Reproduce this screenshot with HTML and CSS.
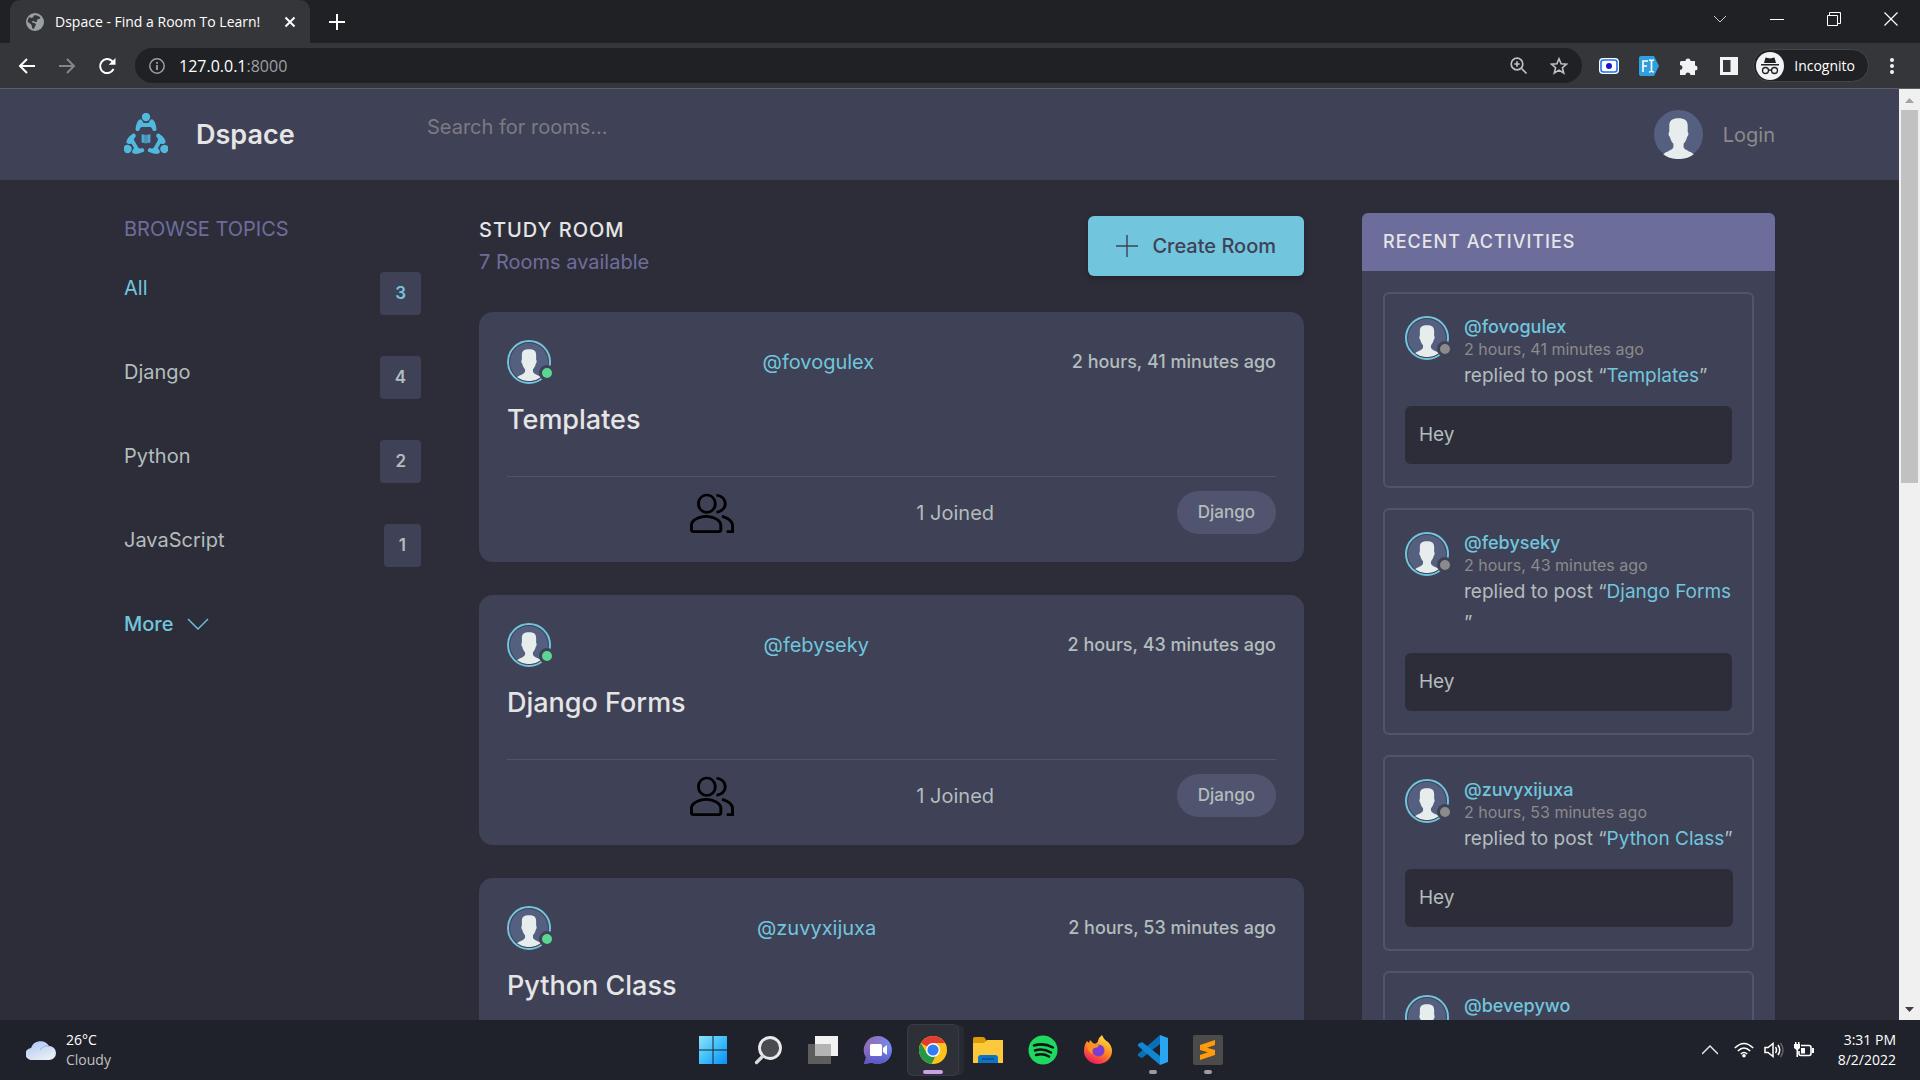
FILE: index.html
```html
<!DOCTYPE html>
<html lang="en">
<head>
<meta charset="utf-8">
<title>Dspace - Find a Room To Learn!</title>
<link rel="stylesheet" href="styles.css">
</head>
<body>
<svg class="sprite" aria-hidden="true">
  <symbol id="avatar" viewBox="0 0 48 48">
    <circle cx="24" cy="24" r="24" fill="#556080"/>
    <path fill="#e7eced" d="M24 8c6 0 9 2 9 7v6c1 1 1 4-.6 5.400-.6 3-2 5-3.400 6.600v3c0 2 3 3.500 6 4.800 2 .8 3 1.500 4 2.600A24 24 0 0 1 24 48a24 24 0 0 1-15-4.600c1-1.100 2-1.800 4-2.600 3-1.300 6-2.800 6-4.800v-3c-1.400-1.600-2.800-3.600-3.400-6.600C14 25 14 22 15 21v-6c0-5 3-7 9-7z"/>
  </symbol>
  <symbol id="users" viewBox="0 0 30 30" preserveAspectRatio="none">
    <path d="M30 30h-5v-2h3v-4c0-2-3-4.500-6.500-5.600l.6-1.900C26.500 17.800 30 20.800 30 24zM20 30H2c-1 0-2-1-2-2v-4c0-4.200 5.700-7.500 11-7.500S22 19.800 22 24v4c0 1-1 2-2 2zM11 18.500c-4.800 0-9 2.900-9 5.500v4h18v-4c0-2.600-4.200-5.500-9-5.500zM18 15.300v-2c3-.4 5-2.400 5-5.300s-2-5-5-5.300V.7c4 .2 7 3.300 7 7.300s-3 7.100-7 7.300zM11.500 15.500c-3.700 0-6.700-3.300-6.700-7.500S7.800.5 11.500.5s6.700 3.300 6.700 7.500-3 7.500-6.700 7.500zm0-13c-2.700 0-4.700 2.400-4.700 5.500s2 5.500 4.700 5.500 4.700-2.400 4.700-5.500-2-5.500-4.700-5.500z"/>
  </symbol>
  <symbol id="member" viewBox="0 0 44 44">
    <circle cx="22" cy="4" r="4.200"/>
    <path d="M15.500 6.500Q17 5.500 18.500 8l1 2h5l1-2Q27 5.500 28.500 6.500 32 9 32.500 16.500 32 18.500 30 18q-1.500 0-2-2.500-.5-1.500-2-1.500h-8q-1.500 0-2 1.500-.5 2.500-2 2.500-2 .5-2.500-1.500Q12 9 15.500 6.500z"/>
  </symbol>
</svg>

<header class="browser">
  <div class="tabs">
    <div class="tab">
      <svg class="tab-icon" viewBox="0 0 18 18"><circle cx="9" cy="9" r="9" fill="#9aa0a6"/><path fill="#35363a" d="M8 2.500c2-.8 5 .3 6.500 2.500-1 1.400-2 .6-3 1.500-1 .8 0 2-1 2.500C9 9.500 8.500 8 7 8c-1.500 0-1 1.500 0 1.800 1.200.4 3 .2 2.800 2C9.600 13.500 8 14 8 16c-1-.2-1.500-.5-2-1 0-2-.4-3.500-2-4.500-1-.7-2-1-2.400-2C1.700 6 3 4.500 4 4c.5 1.500 2 .8 3 .2.700-.4.300-1.200 1-1.700z"/></svg>
      <span class="tab-title">Dspace - Find a Room To Learn!</span>
      <button class="plain" aria-label="Close tab"><svg width="12" height="12" viewBox="0 0 12 12"><path d="M1.500 1.500l9 9m0-9l-9 9" stroke="#fff" stroke-width="2"/></svg></button>
    </div>
    <button class="plain new-tab" aria-label="New tab"><svg width="16" height="16" viewBox="0 0 16 16"><path d="M8 0v16M0 8h16" stroke="#fff" stroke-width="2"/></svg></button>
    <div class="window-buttons">
      <button class="plain" aria-label="Search tabs"><svg width="14" height="14" viewBox="0 0 14 14"><path d="M1 4l6 6 6-6" fill="none" stroke="#ccc"/></svg></button>
      <button class="plain" aria-label="Minimize"><svg width="14" height="14" viewBox="0 0 14 14"><path d="M0 7.500h14" stroke="#fff"/></svg></button>
      <button class="plain" aria-label="Restore"><svg width="14" height="14" viewBox="0 0 14 14"><path d="M.5 3.500h10v10H.5zM2.500 3V.5h11v11H11" fill="none" stroke="#fff"/></svg></button>
      <button class="plain" aria-label="Close"><svg width="14" height="14" viewBox="0 0 14 14"><path d="M.5.5l13 13m0-13l-13 13" stroke="#fff" stroke-width="1.200"/></svg></button>
    </div>
  </div>
  <div class="toolbar">
    <div class="nav">
      <button class="plain" aria-label="Back"><svg width="18" height="18" viewBox="0 0 18 18"><path d="M17 9H2m7-7L2 9l7 7" fill="none" stroke="#fff" stroke-width="2"/></svg></button>
      <button class="plain" aria-label="Forward"><svg width="18" height="18" viewBox="0 0 18 18"><path d="M1 9h15M9 2l7 7-7 7" fill="none" stroke="#85868a" stroke-width="2"/></svg></button>
      <button class="plain" aria-label="Reload"><svg width="18" height="18" viewBox="0 0 18 18"><path d="M15.500 12A7 7 0 1 1 14 4l2 2" fill="none" stroke="#fff" stroke-width="2"/><path d="M17.500 1v6.800h-6.800z" fill="#fff"/></svg></button>
    </div>
    <div class="address">
      <svg width="16" height="16" viewBox="0 0 16 16"><circle cx="8" cy="8" r="7.200" fill="none" stroke="#9aa0a6" stroke-width="1.500"/><path d="M8 7v5M8 4v1.800" stroke="#9aa0a6" stroke-width="1.800"/></svg>
      <span class="url">127.0.0.1<span class="port">:8000</span></span>
      <button class="plain" aria-label="Zoom"><svg width="18" height="18" viewBox="0 0 18 18"><circle cx="7" cy="7" r="5.800" fill="none" stroke="#bdc1c6" stroke-width="1.700"/><path d="M11.500 11.500l5 5M7 4.300v5.400M4.300 7h5.400" stroke="#bdc1c6" stroke-width="1.700"/></svg></button>
      <button class="plain" aria-label="Bookmark"><svg width="18" height="18" viewBox="0 0 18 18"><path d="M9 1.800l2.100 5 5.400.4-4.100 3.500 1.300 5.300L9 13.100 4.300 16l1.300-5.300L1.500 7.200l5.400-.4z" fill="none" stroke="#bdc1c6" stroke-width="1.600"/></svg></button>
    </div>
    <div class="extensions">
      <button class="plain" aria-label="Recorder"><svg width="20" height="20" viewBox="0 0 20 20"><rect y="2" width="20" height="16" rx="4" fill="#fff"/><rect x="2" y="4" width="16" height="12" rx="2.500" fill="none" stroke="#1a73f0" stroke-width="1.600"/><circle cx="10" cy="10" r="3" fill="#1717c8"/></svg></button>
      <button class="plain" aria-label="Font finder"><svg width="20" height="20" viewBox="0 0 20 20"><path d="M2 0h13l5 10-5 10H2q-2 0-2-2V2q0-2 2-2z" fill="#2f9fe0"/><path d="M4 16V5h5M4 10h4M10 4q2 0 2.500 1Q13 4 15 4m-5 12q2 0 2.500-1 .5 1 2.500 1M12.500 5v10" fill="none" stroke="#fff" stroke-width="1.600"/></svg></button>
      <button class="plain" aria-label="Extensions"><svg width="20" height="20" viewBox="0 0 20 20"><path fill="#f1f3f4" d="M2 5h4.500a2.500 2.500 0 1 1 5 0H16v4.500a2.500 2.500 0 1 1 0 5V19h-4.500a2.500 2.500 0 0 0-5 0H1v-5a2.500 2.500 0 0 0 0-5V6z"/></svg></button>
      <button class="plain" aria-label="Side panel"><svg width="20" height="20" viewBox="0 0 20 20"><path fill="#f1f3f4" fill-rule="evenodd" d="M1 1h18v18H1zm3 3v12h7.500V4z"/></svg></button>
      <button class="plain incognito"><svg width="28" height="28" viewBox="0 0 28 28"><circle cx="14" cy="14" r="14" fill="#f1f3f4"/><path fill="#202124" d="M9.500 5.500L14 6.500l4.500-1L20 11H8zM5 12h18v1.500H5z"/><path fill="none" stroke="#202124" stroke-width="1.300" d="M12.500 18.500q1.500-1 3 0"/><circle cx="9.500" cy="18.500" r="3" fill="none" stroke="#202124" stroke-width="1.300"/><circle cx="18.500" cy="18.500" r="3" fill="none" stroke="#202124" stroke-width="1.300"/></svg>Incognito</button>
      <button class="plain" aria-label="Menu"><svg width="6" height="18" viewBox="0 0 6 18"><g fill="#f1f3f4"><circle cx="3" cy="3" r="2"/><circle cx="3" cy="9" r="2"/><circle cx="3" cy="15" r="2"/></g></svg></button>
    </div>
  </div>
</header>

<div class="viewport">
  <div class="page">
    <header class="site-header">
      <a class="brand" href="#">
        <svg width="44" height="44" viewBox="0 0 44 44"><g fill="#51b9de">
          <use href="#member" width="44" height="44"/>
          <use href="#member" width="44" height="44" transform="rotate(120 22 25.300)"/>
          <use href="#member" width="44" height="44" transform="rotate(240 22 25.300)"/></g>
          <path fill="#4a93b8" d="M17.500 21l4.500 1 4.500-1v8.500l-4.500 1-4.500-1z"/><path stroke="#51c2ea" d="M19 22v7.500m6-7.500v7.500"/></svg>
        <span>Dspace</span>
      </a>
      <form class="search"><input type="search" aria-label="Search for rooms" placeholder="Search for rooms..."></form>
      <a class="login" href="#"><svg width="49" height="49"><use href="#avatar"/></svg><span>Login</span></a>
    </header>

    <main class="layout">
      <nav class="topics" aria-label="Browse topics">
        <h2>BROWSE TOPICS</h2>
        <ul>
          <li><a class="active" href="#">All<span class="count">3</span></a></li>
          <li><a href="#">Django<span class="count">4</span></a></li>
          <li><a href="#">Python<span class="count">2</span></a></li>
          <li><a href="#">JavaScript<span class="count">1</span></a></li>
        </ul>
        <a class="more" href="#">More<svg width="22" height="22" viewBox="0 0 22 22"><path d="M1 6l10 10L21 6" fill="none" stroke="#71c6dd" stroke-width="1.400"/></svg></a>
      </nav>

      <section class="rooms">
        <div class="rooms-head">
          <div><h1>STUDY ROOM</h1><p>7 Rooms available</p></div>
          <a class="create" href="#"><svg width="22" height="22" viewBox="0 0 22 22"><path d="M11 0v22M0 11h22" stroke="#3f4156" stroke-width="1.400"/></svg>Create Room</a>
        </div>
        <article class="room">
          <div class="room-top"><span class="avatar online"><svg><use href="#avatar"/></svg></span><a class="user" href="#">@fovogulex</a><time>2 hours, 41 minutes ago</time></div>
          <h3><a href="#">Templates</a></h3>
          <div class="room-foot"><span></span><svg class="users"><use href="#users"/></svg><span>1 Joined</span><a class="pill" href="#">Django</a></div>
        </article>
        <article class="room">
          <div class="room-top"><span class="avatar online"><svg><use href="#avatar"/></svg></span><a class="user" href="#">@febyseky</a><time>2 hours, 43 minutes ago</time></div>
          <h3><a href="#">Django Forms</a></h3>
          <div class="room-foot"><span></span><svg class="users"><use href="#users"/></svg><span>1 Joined</span><a class="pill" href="#">Django</a></div>
        </article>
        <article class="room">
          <div class="room-top"><span class="avatar online"><svg><use href="#avatar"/></svg></span><a class="user" href="#">@zuvyxijuxa</a><time>2 hours, 53 minutes ago</time></div>
          <h3><a href="#">Python Class</a></h3>
        </article>
      </section>

      <aside class="activities">
        <h2>RECENT ACTIVITIES</h2>
        <div class="activity-list">
          <article class="activity">
            <span class="avatar"><svg><use href="#avatar"/></svg></span>
            <div class="who"><a href="#">@fovogulex</a><time>2 hours, 41 minutes ago</time><p>replied to post “<a href="#">Templates</a>”</p></div>
            <div class="message">Hey</div>
          </article>
          <article class="activity">
            <span class="avatar"><svg><use href="#avatar"/></svg></span>
            <div class="who"><a href="#">@febyseky</a><time>2 hours, 43 minutes ago</time><p>replied to post “<a href="#">Django Forms</a> <br>”</p></div>
            <div class="message">Hey</div>
          </article>
          <article class="activity">
            <span class="avatar"><svg><use href="#avatar"/></svg></span>
            <div class="who"><a href="#">@zuvyxijuxa</a><time>2 hours, 53 minutes ago</time><p>replied to post “<a href="#">Python Class</a>”</p></div>
            <div class="message">Hey</div>
          </article>
          <article class="activity">
            <span class="avatar"><svg><use href="#avatar"/></svg></span>
            <div class="who"><a href="#">@bevepywo</a></div>
          </article>
        </div>
      </aside>
    </main>
  </div>
  <div class="scrollbar" aria-hidden="true">
    <svg width="21" height="21" viewBox="0 0 21 21"><path d="M6 14h9l-4.500-5z" fill="#a3a3a3"/></svg>
    <div class="track"><div class="thumb"></div></div>
    <svg width="21" height="21" viewBox="0 0 21 21"><path d="M6 8h9l-4.500 5z" fill="#404040"/></svg>
  </div>
</div>

<footer class="taskbar">
  <div class="weather">
    <svg width="30" height="20" viewBox="0 0 30 20"><defs><linearGradient id="cl" x2=".6" y2="1"><stop stop-color="#a9c6f5"/><stop offset="1" stop-color="#e8eef5"/></linearGradient></defs><path fill="url(#cl)" d="M6 20a6 6 0 0 1-1-12A10 10 0 0 1 23 6a7 7 0 0 1 0 14z"/><path d="M14 10q3-5 9-4" fill="none" stroke="#9db4d8"/></svg>
    <div><div>26°C</div><div class="sky">Cloudy</div></div>
  </div>
  <div class="apps">
    <button class="plain app" aria-label="Start"><svg viewBox="0 0 30 30"><defs><linearGradient id="wn" x2="1" y2="1"><stop stop-color="#8fe1fb"/><stop offset=".5" stop-color="#3fc0fb"/><stop offset="1" stop-color="#0a8df5"/></linearGradient></defs><path fill="url(#wn)" d="M1 1h13.500v13.500H1zM15.500 1H29v13.500H15.500zM1 15.500h13.500V29H1zM15.500 15.500H29V29H15.500z"/></svg></button>
    <button class="plain app" aria-label="Search"><svg viewBox="0 0 30 30"><circle cx="17" cy="13" r="10.500" fill="#4a4b50" stroke="#e8eaec" stroke-width="2.800"/><path d="M9.500 21.500l-6 6" stroke="#d8dadc" stroke-width="3.200" stroke-linecap="round"/></svg></button>
    <button class="plain app" aria-label="Task view"><svg viewBox="0 0 30 30"><path fill="#5d5d5d" d="M0 9h23v20H0z"/><path fill="#f2f2f2" d="M7 1h23v20H7z"/><path fill="#b4b4b4" d="M7 9h16v12H7z"/></svg></button>
    <button class="plain app" aria-label="Chat"><svg viewBox="0 0 30 30"><defs><linearGradient id="ch" x2="1" y2=".4"><stop stop-color="#9a65a8"/><stop offset="1" stop-color="#6f8df0"/></linearGradient><linearGradient id="cb" x2="0" y2="1"><stop stop-color="#5b55c8" stop-opacity="0"/><stop offset="1" stop-color="#5b55c8"/></linearGradient></defs><path fill="url(#ch)" d="M15 1a14 14 0 1 1-6 26.700L1 29l2-6.500A14 14 0 0 1 15 1z"/><path fill="url(#cb)" d="M1 12h28q1 8-6 14-7 5-14 1.700L1 29l2-6.500z"/><rect x="7" y="9" width="12" height="12" rx="1.500" fill="#fff"/><path fill="#fff" d="M20 13l4-3v10l-4-3z"/></svg></button>
    <button class="plain app current" aria-label="Chrome"><svg viewBox="0 0 30 30"><circle cx="15" cy="15" r="14" fill="#fcc31e"/><path fill="#e43a2f" d="M15 15L2.900 8A14 14 0 0 1 27.100 8H15z"/><path fill="#25974a" d="M2.900 8l6 10.500L15 22l-1.500 7A14 14 0 0 1 2.900 8z"/><path fill="#25974a" d="M9 18h10l-5.500 11z"/><circle cx="15" cy="15" r="7" fill="#fff"/><circle cx="15" cy="15" r="5.600" fill="#2f7df0"/></svg></button>
    <button class="plain app" aria-label="File Explorer"><svg viewBox="0 0 30 30"><path fill="#dc9a05" d="M0 4q0-2 2-2h8q2 0 3 3v4H0z"/><path fill="#fdc93c" d="M0 8h11l3-3h16v23H0z"/><path fill="#0b74c8" d="M5 28v-5q0-3 3-3h14q3 0 3 3v5z"/><path d="M9 24h12" stroke="#064b8c" stroke-width="1.500"/></svg></button>
    <button class="plain app" aria-label="Spotify"><svg viewBox="0 0 30 30"><circle cx="15" cy="15" r="14.500" fill="#1fd862"/><path d="M6 10.500q10-3 19 2M7 15.500q8-2.500 16 2M8 20q7-2 13 1.500" fill="none" stroke="#101510" stroke-width="2.500" stroke-linecap="round"/></svg></button>
    <button class="plain app" aria-label="Firefox"><svg viewBox="0 0 30 30"><defs><linearGradient id="ff" x1=".8" y1="0" x2=".3" y2="1"><stop stop-color="#ffe94a"/><stop offset=".5" stop-color="#ff8a1f"/><stop offset="1" stop-color="#f0155f"/></linearGradient></defs><path fill="url(#ff)" d="M19 0q2 5 6 7 4 4 4 9a14 13 0 0 1-28 0q0-6 3-10l2 2 1-3 4 4q3 0 4-3 1-4 4-6z"/><circle cx="15.500" cy="15.500" r="6" fill="#7a3fd0"/><path fill="#ff8f25" d="M4 9q6-2 12 1-1 3-5 3-3 2-1 6-6-2-6-10z"/></svg></button>
    <button class="plain app open" aria-label="Visual Studio Code"><svg viewBox="0 0 30 30"><path d="M0 19L22 0v9L4 23l-4-2z" fill="#0a6fb8"/><path fill="#1187d4" d="M0 9l4-2 18 14v9L0 11z"/><path fill="#2aa5f2" d="M22 0l8 3v24l-8 3z"/></svg></button>
    <button class="plain app open" aria-label="Sublime Text"><svg viewBox="0 0 30 30"><rect width="30" height="30" rx="2" fill="#4b4b4b"/><path fill="#ff9a0a" d="M7 10l15-5v5l-8 2.700 8 2.300v5L7 25v-5l8-2.700L7 15z"/></svg></button>
  </div>
  <div class="tray">
    <svg width="16" height="16" viewBox="0 0 16 16"><path d="M0 12l8-8 8 8" fill="none" stroke="#eee" stroke-width="1.400"/></svg>
    <svg width="20" height="16" viewBox="0 0 20 16"><g fill="none" stroke="#fff" stroke-width="1.600"><path d="M.8 6q9.200-9 18.400 0M3.800 9q6.200-6 12.400 0M6.800 12q3.200-3 6.400 0"/></g><circle cx="10" cy="13.800" r="1.800" fill="#fff"/></svg>
    <svg width="20" height="16" viewBox="0 0 20 16"><path d="M1 5.500h3L9 1.500v13l-5-4H1zM11.500 5q2 3 0 6M14 3q3.500 5 0 10" fill="none" stroke="#fff" stroke-width="1.500"/><path d="M16.500 1q5 7 0 14" fill="none" stroke="#666" stroke-width="1.400"/></svg>
    <svg width="20" height="16" viewBox="0 0 20 16"><path d="M7 3.500h8q2 0 2 2v6q0 2-2 2H7q-2 0-2-2V9" fill="none" stroke="#fff" stroke-width="1.600"/><path d="M18 6h2v5h-2zM7 6h4v5.500H7zM0 2h6v4L4 8v7H2.500V8L0 6zM1 0h1.500v2H1zm3 0h1.500v2H4z" fill="#fff"/></svg>
    <div class="clock"><div>3:31 PM</div><div>8/2/2022</div></div>
  </div>
</footer>
</body>
</html>
```
FILE: styles.css
```css
*, *::after { box-sizing: border-box; }

:root {
  --light: #e5e5e5;
  --text: #b2bdbd;
  --muted: #8b8b8b;
  --main: #71c6dd;
  --violet: #6d6d9c;
  --panel: #3f4156;
  --panel-light: #51546e;
  --dark: #2d2d39;
}

body {
  margin: 0;
  height: 100vh;
  display: flex;
  flex-direction: column;
  overflow: hidden;
  background: var(--dark);
  color: var(--text);
  font: 20px/32px Inter, sans-serif;
}

h1, h2, h3, p, ul { margin: 0; padding: 0; font-weight: 400; }
ul { list-style: none; }
a { color: inherit; text-decoration: none; }
svg { display: block; flex: none; }
.sprite { position: absolute; width: 0; height: 0; }

.plain {
  display: flex;
  align-items: center;
  justify-content: center;
  padding: 0;
  border: 0;
  background: none;
  color: inherit;
  font: inherit;
}

/* Browser window */
.browser {
  flex: none;
  background: #202124;
  color: #fff;
  font: 14px/20px "Open Sans", sans-serif;
  border-bottom: 1px solid #5d5e62;
}
.tabs { display: flex; align-items: center; height: 43px; padding-left: 10px; }
.tab {
  display: flex;
  align-items: center;
  align-self: stretch;
  width: 300px;
  padding: 0 14px 0 16px;
  gap: 11px;
  background: #35363a;
  border-radius: 10px 10px 0 0;
}
.tab-icon { width: 18px; height: 18px; }
.tab-title { flex: 1; white-space: nowrap; }
.new-tab { margin-left: 19px; }
.window-buttons { display: flex; align-items: center; gap: 43px; margin-left: auto; padding: 0 22px 6px 0; }
.toolbar {
  display: flex;
  align-items: center;
  height: 45px;
  padding: 0 25px 0 18px;
  background: #35363a;
}
.nav { display: flex; gap: 22px; width: 117px; }
.address {
  flex: 1;
  display: flex;
  align-items: center;
  gap: 22px;
  height: 35px;
  padding: 0 14px;
  border-radius: 18px;
  background: #202124;
}
.url { flex: 1; margin-left: -8px; font-size: 16px; }
.port { color: #9aa0a6; }
.extensions { display: flex; align-items: center; gap: 20px; margin-left: 17px; }
.incognito {
  gap: 10px;
  height: 33px;
  margin-left: -6px;
  padding: 0 13px 0 2px;
  border: 1px solid #46474b;
  border-radius: 17px;
  background: #202124;
}

/* Page viewport */
.viewport { flex: 1; min-height: 0; display: flex; }
.page { flex: 1; min-width: 0; overflow: hidden; }
.scrollbar { width: 21px; display: flex; flex-direction: column; background: #f0f0f0; }
.track { flex: 1; padding: 0 2px; }
.thumb { height: 42%; background: #c1c1c1; }

/* Site header */
.site-header {
  display: flex;
  align-items: center;
  height: 91px;
  padding: 0 124px;
  background: var(--panel);
}
.brand {
  display: flex;
  align-items: center;
  gap: 28px;
  width: 303px;
  color: var(--light);
  font-size: 27px;
  font-weight: 600;
}
.search { flex: 1; padding-bottom: 16px; }
.search input {
  width: 100%;
  padding: 0;
  border: 0;
  background: none;
  color: var(--light);
  font: inherit;
}
.search input::placeholder { color: #7b7c80; }
.login { display: flex; align-items: center; gap: 20px; color: var(--muted); }

/* Three-column layout */
.layout {
  display: grid;
  grid-template-columns: 297fr 825fr 413fr;
  gap: 58px;
  align-items: start;
  padding: 33px 124px;
}

.topics h2 { color: var(--violet); font-size: 20px; margin-bottom: 27px; }
.topics li { height: 84px; }
.topics li a { display: flex; justify-content: space-between; }
.topics .active, .more { color: var(--main); }
.count {
  height: 43px;
  padding: 0 15px;
  border-radius: 4px;
  background: var(--panel);
  font-size: 17px;
  font-weight: 600;
  line-height: 43px;
}
.more { display: flex; align-items: center; gap: 14px; font-weight: 500; }

.rooms { display: flex; flex-direction: column; gap: 33px; }
.rooms-head { display: flex; justify-content: space-between; align-items: center; height: 66px; }
.rooms h1 { color: var(--light); font-size: 20px; font-weight: 500; letter-spacing: 1px; }
.rooms-head p { color: var(--violet); }
.create {
  display: flex;
  align-items: center;
  gap: 14px;
  height: 60px;
  padding: 0 28px;
  border-radius: 6px;
  background: var(--main);
  color: var(--panel);
  font-weight: 500;
  box-shadow: 0 2px 6px #0004;
}

.room { height: 250px; padding: 28px 28px 0; border-radius: 14px; background: var(--panel); }
.room-top, .room-foot { display: flex; justify-content: space-between; align-items: center; }
.room-top .avatar { margin-right: 14px; }
.user { color: var(--main); }
.room-top time { font-size: 18px; font-weight: 500; }
.room h3 { height: 92px; padding-top: 20px; color: var(--light); font-size: 27px; font-weight: 500; }
.room-foot { padding-top: 14px; border-top: 1px solid var(--panel-light); }
.users { width: 44px; height: 40px; }
.pill {
  padding: 0 21px;
  border-radius: 22px;
  background: var(--panel-light);
  font-size: 17px;
  font-weight: 500;
  line-height: 43px;
}

.avatar {
  position: relative;
  width: 44px;
  height: 44px;
  padding: 1px;
  border: 2px solid var(--main);
  border-radius: 50%;
}
.avatar svg { width: 100%; height: 100%; }
.avatar::after {
  content: "";
  position: absolute;
  right: -6px;
  bottom: 1px;
  width: 16px;
  height: 16px;
  border: 3px solid var(--panel);
  border-radius: 50%;
  background: var(--muted);
}
.avatar.online::after { background: #5dd693; }

.activities { border-radius: 6px 6px 0 0; background: var(--panel); overflow: hidden; }
.activities h2 {
  padding: 13px 21px;
  background: var(--violet);
  color: var(--light);
  font-size: 18px;
  font-weight: 500;
  letter-spacing: 1px;
}
.activity-list { display: flex; flex-direction: column; gap: 20px; padding: 21px; }
.activity {
  display: grid;
  grid-template-columns: 44px 1fr;
  column-gap: 15px;
  padding: 22px 20px;
  border: 2px solid var(--panel-light);
  border-radius: 6px;
}
.who { white-space: nowrap; font-size: 19px; }
.who > a, .who time { display: block; line-height: 22px; }
.who > a { font-size: 18px; font-weight: 500; }
.who a { color: var(--main); }
.who time { color: var(--muted); font-size: 16px; }
.who p { line-height: 31px; }
.message {
  grid-column: 1 / -1;
  height: 58px;
  margin-top: 15px;
  padding: 0 14px;
  border-radius: 6px;
  background: var(--dark);
  font-size: 19px;
  line-height: 58px;
}

/* Taskbar */
.taskbar {
  flex: none;
  display: grid;
  grid-template-columns: 1fr auto 1fr;
  align-items: center;
  height: 60px;
  padding: 0 24px;
  background: #20222b;
  color: #fff;
  font: 14px/20px "Open Sans", sans-serif;
}
.weather { display: flex; align-items: center; gap: 10px; padding-left: 2px; }
.sky { color: #c0c0c4; }
.apps { display: flex; gap: 5px; }
.app { position: relative; width: 50px; height: 50px; border-radius: 5px; }
.app svg { width: 30px; height: 30px; }
.current { background: #2e3037; box-shadow: 0 0 0 1px #3a3c43, 6px 0 0 #292b32; }
.current::after, .open::after {
  content: "";
  position: absolute;
  left: 50%;
  bottom: 1px;
  width: 8px;
  height: 4px;
  margin-left: -4px;
  border-radius: 2px;
  background: #9b9ba0;
}
.current::after { width: 20px; margin-left: -10px; background: #c9a3e6; }
.tray { display: flex; align-items: center; justify-content: flex-end; gap: 10px; }
.tray svg:first-child { margin-right: 6px; }
.clock { min-width: 72px; text-align: right; }
```
